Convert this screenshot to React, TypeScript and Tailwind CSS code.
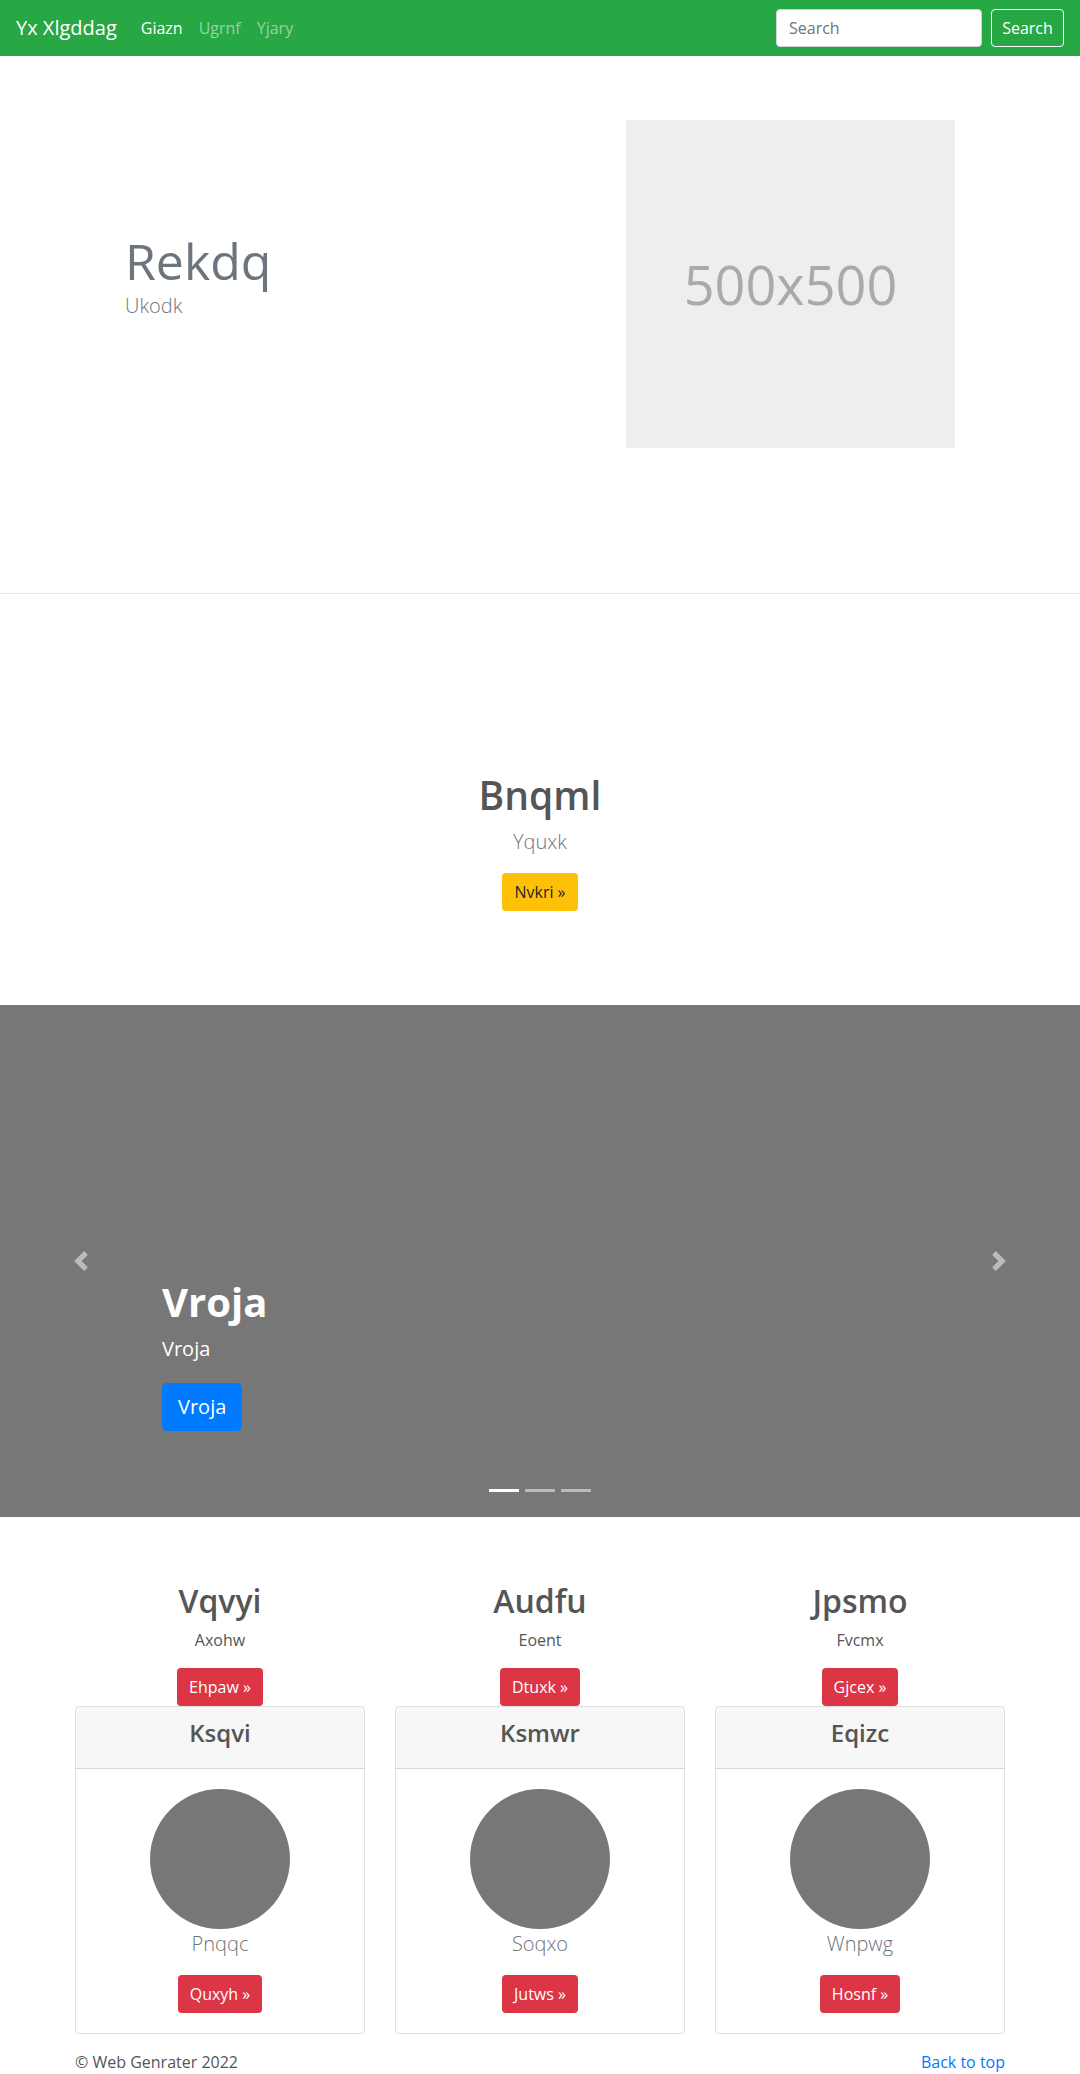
import React from 'react';

const features = [
  { title: 'Vqvyi', text: 'Axohw', cta: 'Ehpaw', card: 'Ksqvi', lead: 'Pnqqc', btn: 'Quxyh' },
  { title: 'Audfu', text: 'Eoent', cta: 'Dtuxk', card: 'Ksmwr', lead: 'Soqxo', btn: 'Jutws' },
  { title: 'Jpsmo', text: 'Fvcmx', cta: 'Gjcex', card: 'Eqizc', lead: 'Wnpwg', btn: 'Hosnf' },
];

function Chevron({ dir }: { dir: 'left' | 'right' }) {
  return (
    <svg width="20" height="20" viewBox="0 0 8 8" fill="#fff" className="opacity-50">
      {dir === 'left' ? (
        <path d="M5.25 0l-4 4 4 4 1.5-1.5L4.25 4l2.5-2.5L5.25 0z" />
      ) : (
        <path d="M2.75 0l-1.5 1.5L3.75 4l-2.5 2.5L2.75 8l4-4-4-4z" />
      )}
    </svg>
  );
}

export default function App() {
  return (
    <div className="bg-white font-['Open_Sans',sans-serif] text-base text-[#555]">
      <nav className="flex h-14 items-center bg-[#28a745] px-4">
        <a className="mr-4 text-xl text-white">Yx Xlgddag</a>
        <a className="px-2 text-white">Giazn</a>
        <a className="px-2 text-white/50">Ugrnf</a>
        <a className="px-2 text-white/50">Yjary</a>
        <form className="ml-auto flex items-center gap-[9px]">
          <input
            placeholder="Search"
            className="h-[38px] w-[206px] rounded border border-[#ced4da] bg-white px-3 text-[#495057] placeholder:text-[#6c757d]"
          />
          <button type="button" className="h-[38px] w-[73px] rounded border border-white text-white">
            Search
          </button>
        </form>
      </nav>

      <section className="flex items-center justify-between border-b border-[#e5e5e5] px-[125px] pt-16 pb-[145px]">
        <div>
          <h1 className="text-[50px] leading-[1.2] text-[#6c757d]">Rekdq</h1>
          <p className="mb-4 text-xl leading-[1.5] font-light text-[#6c757d]">Ukodk</p>
        </div>
        <div className="flex h-[328px] w-[329px] items-center justify-center bg-[#eeeeee] text-[54px] text-[#aaaaaa]">
          500x500
        </div>
      </section>

      <section className="pt-[178px] pb-[94px] text-center">
        <h1 className="mb-2 text-[39px] leading-[1.2] font-semibold text-[#555]">Bnqml</h1>
        <p className="mb-4 text-xl leading-[1.5] font-light text-[#6c757d]">Yquxk</p>
        <button type="button" className="h-[38px] rounded bg-[#ffc107] px-3 text-[#212529]">
          Nvkri »
        </button>
      </section>

      <section className="relative flex h-[512px] flex-col justify-end bg-[#777777] pb-[86px] pl-[162px] text-white">
        <h1 className="mb-2 text-[40px] leading-[1.2] font-bold">Vroja</h1>
        <p className="mb-[19px] text-xl leading-[1.5]">Vroja</p>
        <div>
          <button type="button" className="h-12 rounded-[5px] bg-[#007bff] px-4 text-xl text-white">
            Vroja
          </button>
        </div>
        <div className="absolute top-0 bottom-0 left-0 flex w-[15%] items-center justify-center">
          <Chevron dir="left" />
        </div>
        <div className="absolute top-0 right-0 bottom-0 flex w-[15%] items-center justify-center">
          <Chevron dir="right" />
        </div>
        <div className="absolute right-0 bottom-[25px] left-0 flex justify-center gap-[6px]">
          <span className="h-[3px] w-[30px] bg-white" />
          <span className="h-[3px] w-[30px] bg-white/50" />
          <span className="h-[3px] w-[30px] bg-white/50" />
        </div>
      </section>

      <main className="mx-auto w-[960px] pt-[65px]">
        <div className="grid grid-cols-3">
          {features.map((f) => (
            <div key={f.title} className="px-[15px] text-center">
              <h2 className="mb-2 text-[32px] leading-[1.2] font-semibold">{f.title}</h2>
              <p className="mb-4 leading-[1.5]">{f.text}</p>
              <button type="button" className="h-[38px] rounded bg-[#dc3545] px-3 text-white">
                {f.cta} »
              </button>
              <div className="rounded border border-black/[0.125]">
                <div className="border-b border-black/[0.125] bg-black/[0.03] px-5 py-3">
                  <h4 className="mb-2 text-2xl leading-[1.2] font-semibold">{f.card}</h4>
                </div>
                <div className="p-5">
                  <div className="mx-auto h-[140px] w-[140px] rounded-full bg-[#777777]" />
                  <p className="mb-4 text-xl leading-[1.5] font-light text-[#6c757d]">{f.lead}</p>
                  <button type="button" className="h-[38px] rounded bg-[#dc3545] px-3 text-white">
                    {f.btn} »
                  </button>
                </div>
              </div>
            </div>
          ))}
        </div>
        <footer className="flex justify-between px-[15px] pt-4 pb-8 leading-[1.5]">
          <p>© Web Genrater 2022</p>
          <a className="text-[#007bff]">Back to top</a>
        </footer>
      </main>
    </div>
  );
}
